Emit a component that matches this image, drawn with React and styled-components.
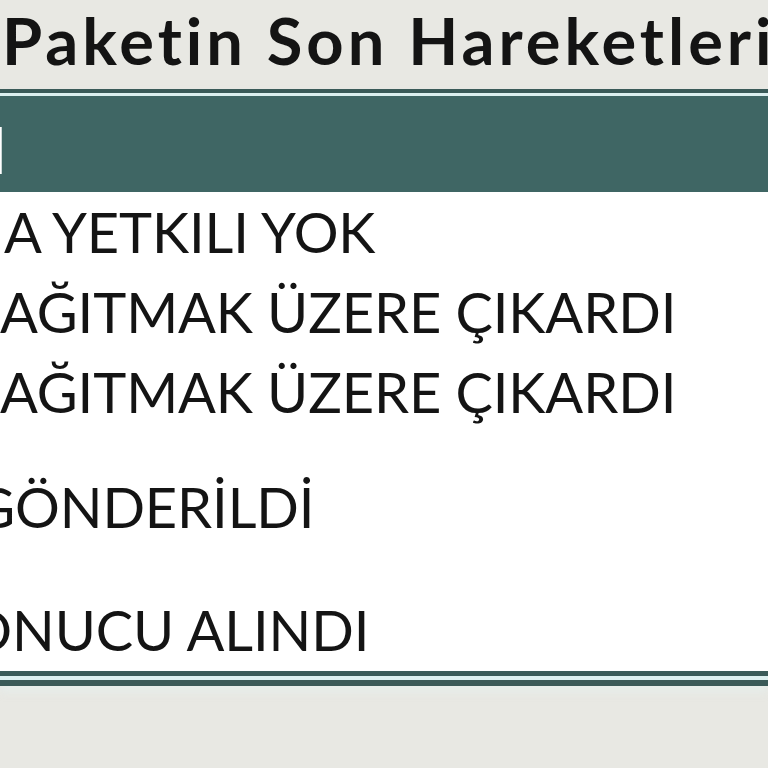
import React from "react";
import styled, { createGlobalStyle } from "styled-components";

const Global = createGlobalStyle`
  html, body { margin: 0; padding: 0; background: #e8e8e3; overflow: hidden; }
  #root { width: 768px; height: 768px; overflow: hidden; }
`;

const Page = styled.div`
  width: 768px;
  height: 768px;
  overflow: hidden;
  background: #e8e8e3;
  font-family: Lato, "Noto Sans", sans-serif;
  font-variant-ligatures: none;
`;

const Title = styled.h2`
  margin: 0;
  box-sizing: border-box;
  height: 89px;
  padding: 8px 0 0 2px;
  font-size: 65px;
  font-weight: 700;
  letter-spacing: 4px;
  line-height: 1;
  color: #141414;
  white-space: nowrap;
  overflow: hidden;
`;

const Table = styled.div`
  background: #dcefef;
  border-top: 4px solid #3a5a58;
  border-bottom: 6px solid #3a5a58;
  padding: 3px 0 4px;
  box-shadow: 0 6px 8px rgba(230, 240, 238, 0.7);
`;

const Header = styled.div`
  box-sizing: border-box;
  height: 96px;
  padding-top: 21px;
  background: #3f6664;
  color: #ffffff;
  font-size: 65px;
  font-weight: 700;
  line-height: 1;
  white-space: nowrap;
  overflow: hidden;
`;

const Body = styled.div`
  background: #ffffff;
  border-bottom: 5px solid #3a5a58;
`;

const Row = styled.div`
  box-sizing: border-box;
  height: ${(p) => p.$h}px;
  padding-top: ${(p) => p.$pt}px;
  font-size: 56px;
  line-height: 66px;
  letter-spacing: -0.1px;
  color: #141414;
  white-space: nowrap;
  overflow: hidden;
`;

const Cut = styled.span`
  display: inline-block;
  width: 400px;
  margin-left: ${(p) => p.$show - 400}px;
  text-align: right;
`;

const rows = [
  { h: 80, pt: 7, pre: "ALIM", show: 4, rest: "A YETKILI YOK" },
  { h: 80, pt: 7, pre: "D", show: 0, rest: "AĞITMAK ÜZERE ÇIKARDI" },
  { h: 80, pt: 7, pre: "D", show: 0, rest: "AĞITMAK ÜZERE ÇIKARDI" },
  { h: 120, pt: 42, pre: "G", show: 15, rest: "ÖNDERİLDİ" },
  { h: 119, pt: 45, pre: "SO", show: 12, rest: "NUCU ALINDI" },
];

export default function App() {
  return (
    <Page>
      <Global />
      <Title>Paketin Son Hareketleri</Title>
      <Table>
        <Header>
          <Cut $show={7}>İŞLEM</Cut>
        </Header>
        <Body>
          {rows.map((r, i) => (
            <Row key={i} $h={r.h} $pt={r.pt}>
              <Cut $show={r.show}>{r.pre}</Cut>
              {r.rest}
            </Row>
          ))}
        </Body>
      </Table>
    </Page>
  );
}
